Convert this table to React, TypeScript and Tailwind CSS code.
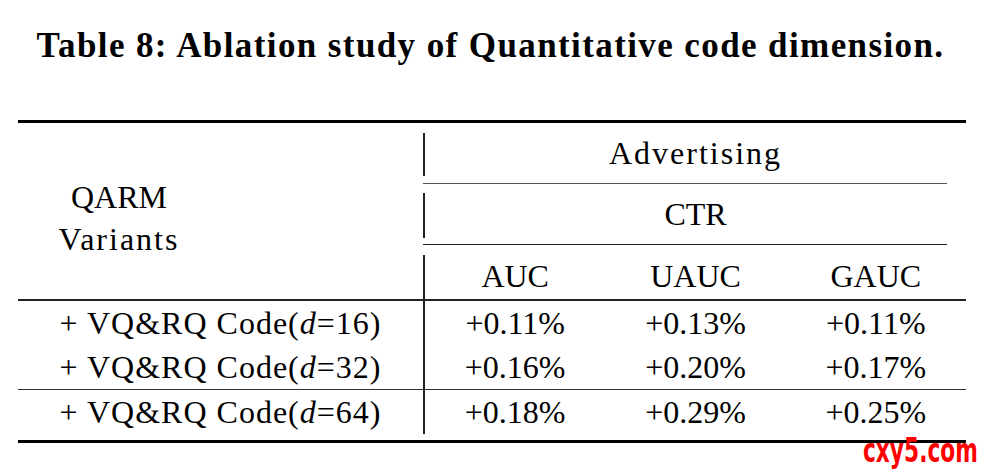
const serif = { fontFamily: '"Liberation Serif", "DejaVu Serif", serif' };

const rows = [
  { d: '16', v: ['+0.11%', '+0.13%', '+0.11%'] },
  { d: '32', v: ['+0.16%', '+0.20%', '+0.17%'] },
];
const lastRow = { d: '64', v: ['+0.18%', '+0.29%', '+0.25%'] };

function Variant({ d }: { d: string }) {
  return (
    <span className="tracking-[1px]">
      + VQ&amp;RQ Code(<i>d</i>=<span>{d}</span>)
    </span>
  );
}

function BodyRow({ d, v }: { d: string; v: string[] }) {
  return (
    <div className="grid grid-cols-[405px_2px_1fr_1fr_1fr] h-[44px] text-[32px] leading-[44px]">
      <div className="text-center">
        <Variant d={d} />
      </div>
      <div className="bg-[#222]" />
      {v.map((x, i) => (
        <div key={i} className="text-center">
          {x}
        </div>
      ))}
    </div>
  );
}

export default function App() {
  return (
    <div className="relative w-[981px] h-[471px] overflow-hidden bg-white text-black" style={serif}>
      <h1 className="pt-[26px] text-center text-[35px] leading-[40px] font-bold tracking-[1.4px]">
        Table 8: Ablation study of Quantitative code dimension.
      </h1>

      <div className="ml-[18px] mt-[54px] w-[948px]">
        <div className="h-[3px] bg-black" />

        {/* header */}
        <div className="flex h-[176px]">
          <div className="w-[202px] pt-[53px] text-center text-[32px] leading-[42px]">
            <div>QARM</div>
            <div className="tracking-[2px]">Variants</div>
          </div>
          <div className="w-[203px]" />
          <div className="flex flex-1 flex-col">
            <div className="flex h-[60px]">
              <div className="mt-[10px] h-[43px] w-[2px] bg-[#222]" />
              <div className="flex-1 text-center text-[32px] leading-[60px] tracking-[2px]">Advertising</div>
            </div>
            <div className="mr-[19px] h-px bg-[#555]" />
            <div className="flex h-[60px]">
              <div className="mt-[9px] h-[45px] w-[2px] bg-[#222]" />
              <div className="flex-1 text-center text-[32px] leading-[60px]">CTR</div>
            </div>
            <div className="mr-[19px] h-px bg-[#222]" />
            <div className="flex h-[54px]">
              <div className="mt-[10px] h-[44px] w-[2px] bg-[#222]" />
              <div className="grid flex-1 grid-cols-3 pt-[4px] text-center text-[32px] leading-[54px]">
                <div>AUC</div>
                <div>UAUC</div>
                <div>GAUC</div>
              </div>
            </div>
          </div>
        </div>

        <div className="h-[2px] bg-[#222]" />

        {rows.map((r) => (
          <BodyRow key={r.d} d={r.d} v={r.v} />
        ))}

        <div className="h-px bg-[#333]" />

        <BodyRow d={lastRow.d} v={lastRow.v} />
        <div className="h-[6px]" />

        <div className="h-[3px] bg-black" />
      </div>

      {/* watermark */}
      <div
        className="absolute left-[863px] top-[431px] origin-left scale-x-[0.71] text-[34px] font-bold leading-[38px] text-[#ff0000]"
        style={{ fontFamily: '"DejaVu Sans Condensed", "Liberation Sans", sans-serif' }}
      >
        cxy5.com
      </div>
    </div>
  );
}
